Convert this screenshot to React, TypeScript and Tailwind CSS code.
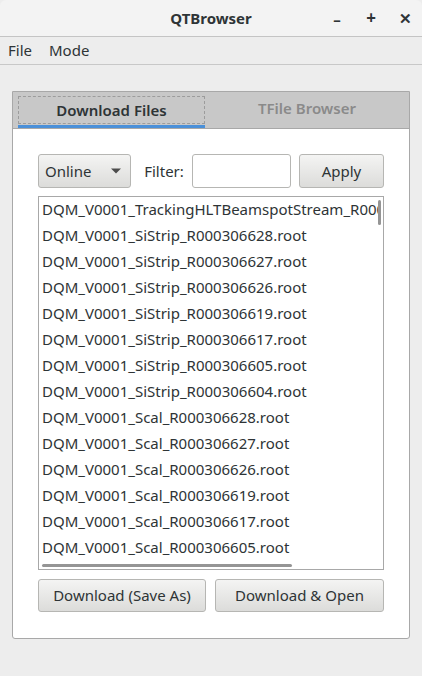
import React from 'react';

const files = [
  'DQM_V0001_TrackingHLTBeamspotStream_R000306628.root',
  'DQM_V0001_SiStrip_R000306628.root',
  'DQM_V0001_SiStrip_R000306627.root',
  'DQM_V0001_SiStrip_R000306626.root',
  'DQM_V0001_SiStrip_R000306619.root',
  'DQM_V0001_SiStrip_R000306617.root',
  'DQM_V0001_SiStrip_R000306605.root',
  'DQM_V0001_SiStrip_R000306604.root',
  'DQM_V0001_Scal_R000306628.root',
  'DQM_V0001_Scal_R000306627.root',
  'DQM_V0001_Scal_R000306626.root',
  'DQM_V0001_Scal_R000306619.root',
  'DQM_V0001_Scal_R000306617.root',
  'DQM_V0001_Scal_R000306605.root',
];

const btn =
  'flex items-center rounded-[3px] border border-[#b6b6b3] bg-gradient-to-b from-[#f4f4f3] to-[#dcdcda] text-[#2e3436]';

export default function App() {
  return (
    <div
      className="w-[422px] h-[676px] bg-[#ededed] flex flex-col text-[#2e3436] overflow-hidden"
      style={{ fontFamily: '"Noto Sans", "Open Sans", sans-serif' }}
    >
      {/* title bar */}
      <div className="h-[37px] shrink-0 bg-[#f3f3f3] rounded-t-[6px] border-b border-[#c4c4c4] flex items-center relative">
        <div className="flex-1 text-center text-[15px] font-bold">QTBrowser</div>
        <div className="absolute right-0 top-0 h-full flex items-center">
          <span className="w-[34px] text-center text-[15px] font-bold pt-[3px]">–</span>
          <span className="w-[34px] text-center text-[17px] font-bold">+</span>
          <span className="w-[34px] text-center text-[15px] font-bold">✕</span>
        </div>
      </div>
      {/* menu bar */}
      <div className="h-[28px] shrink-0 border-b border-[#c8c8c8] flex items-center px-[8px] gap-[17px] text-[15px]">
        <span>File</span>
        <span>Mode</span>
      </div>
      {/* tab widget */}
      <div className="mt-[26px] mx-[12px] w-[398px] h-[548px] flex flex-col border border-[#a8a8a8] rounded-b-[3px] bg-white">
        <div className="h-[37px] shrink-0 bg-[#c8c8c8] border-b border-[#a8a8a8] flex">
          <div className="ml-[5px] w-[187px] flex flex-col">
            <div className="mt-[4px] h-[28px] border border-dashed border-[#9c9c9c] flex items-center justify-center text-[15px] font-semibold text-[#2e3436]">
              Download Files
            </div>
            <div className="mt-auto h-[3px] bg-[#4a90d9]" />
          </div>
          <div className="flex-1 flex items-center justify-center text-[15px] font-semibold text-[#8a8a8a] pb-[3px]">
            TFile Browser
          </div>
        </div>
        <div className="flex-1 flex flex-col px-[25px] pt-[25px]">
          <div className="flex items-center h-[34px]">
            <div className={`${btn} w-[94px] h-[34px] justify-between pl-[6px] pr-[8px] text-[15px]`}>
              <span>Online</span>
              <svg width="12" height="8" viewBox="0 0 12 8">
                <path d="M1 1.5 L11 1.5 L6 6.5 Z" fill="#4c4c4c" />
              </svg>
            </div>
            <span className="ml-[13px] text-[15px]">Filter:</span>
            <div className="ml-[8px] w-[100px] h-[34px] rounded-[3px] border border-[#b6b6b3] bg-white" />
            <div className={`${btn} justify-center ml-[8px] w-[86px] h-[34px] text-[15px]`}>Apply</div>
          </div>
          <div className="mt-[8px] w-[346px] h-[374px] border border-[#a8a8a8] relative overflow-hidden">
            <div className="-mt-[1px] pl-[3px] pr-[4px] overflow-hidden">
              {files.map((f) => (
                <div key={f} className="h-[26px] flex items-center text-[15px] whitespace-nowrap overflow-hidden">
                  {f}
                </div>
              ))}
            </div>
            <div className="absolute right-[2px] top-[3px] w-[3px] h-[25px] rounded-full bg-[#959595]" />
            <div className="absolute left-[3px] bottom-[2px] w-[250px] h-[3px] rounded-full bg-[#959595]" />
          </div>
          <div className="mt-[9px] flex gap-[9px]">
            <div className={`${btn} justify-center w-[168px] h-[33px] text-[15px]`}>Download (Save As)</div>
            <div className={`${btn} justify-center w-[169px] h-[33px] text-[15px]`}>Download &amp; Open</div>
          </div>
        </div>
      </div>
    </div>
  );
}
